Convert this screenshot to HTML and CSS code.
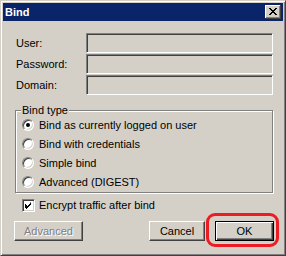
FILE: index.html
```html
<!DOCTYPE html>
<html lang="en">
<head>
<meta charset="UTF-8">
<title>Bind</title>
<link rel="stylesheet" href="styles.css">
</head>
<body>
<div class="window">
    <div class="titlebar">
        <span class="title">Bind</span>
        <span class="close-btn">
            <svg width="8" height="7" viewBox="0 0 8 7"><path d="M0 0h2v1h1v1h2v-1h1v-1h2v1h-1v1h-1v1h-1v1h1v1h1v1h1v1h-2v-1h-1v-1h-2v1h-1v1h-2v-1h1v-1h1v-1h1v-1h-1v-1h-1v-1h-1z" fill="#000"/></svg>
        </span>
    </div>
    <div class="content">
        <div class="fields">
            <label>User:</label><span class="field"></span>
            <label>Password:</label><span class="field"></span>
            <label>Domain:</label><span class="field"></span>
        </div>

        <div class="group">
            <span class="group-label">Bind type</span>
            <div class="option"><span class="radio checked"></span>Bind as currently logged on user</div>
            <div class="option"><span class="radio"></span>Bind with credentials</div>
            <div class="option"><span class="radio"></span>Simple bind</div>
            <div class="option"><span class="radio"></span>Advanced (DIGEST)</div>
        </div>

        <div class="option encrypt">
            <span class="checkbox">
                <svg width="7" height="7" viewBox="0 0 7 7"><path d="M6 0v3h-1v1h-1v1h-1v1h-1v1h-1v-1h-1v-4h1v1h1v1h1v-1h1v-1h1v-1z" fill="#000"/></svg>
            </span>Encrypt traffic after bind
        </div>

        <div class="buttons">
            <button class="btn disabled advanced">Advanced</button>
            <span class="spacer"></span>
            <button class="btn cancel">Cancel</button>
            <button class="btn default ok">OK</button>
        </div>
    </div>
</div>
</body>
</html>
```

FILE: styles.css
```css
body {
    margin: 0;
    background: #d4d0c8;
    font-family: "Liberation Sans", Arial, sans-serif;
    font-size: 11px;
    color: #000;
}

.window {
    width: 286px;
    height: 256px;
    box-sizing: border-box;
    padding: 2px;
    border: 1px solid;
    border-color: #d4d0c8 #404040 #404040 #d4d0c8;
    box-shadow: inset 1px 1px #fff, inset -1px -1px #808080;
    background: #d4d0c8;
}

.titlebar {
    height: 18px;
    background: #0a246a;
    display: flex;
    align-items: center;
    justify-content: space-between;
    padding: 0 2px 0 2px;
}

.title {
    color: #fff;
    font-weight: bold;
    font-size: 11px;
}

.close-btn {
    width: 16px;
    height: 14px;
    box-sizing: border-box;
    background: #d4d0c8;
    box-shadow: inset -1px -1px #404040, inset 1px 1px #fff, inset -2px -2px #808080;
    display: flex;
    align-items: center;
    justify-content: center;
    padding: 0 1px 1px 0;
}

.content {
    padding: 12px 10px 0 12px;
}

.fields {
    display: grid;
    grid-template-columns: 71px 1fr;
    grid-auto-rows: 20px;
    row-gap: 1px;
    align-items: center;
}

.fields label {
    padding-left: 1px;
}

.field {
    height: 20px;
    box-sizing: border-box;
    border: 1px solid;
    border-color: #808080 #fff #fff #808080;
    box-shadow: inset 1px 1px #404040, inset -1px -1px #d4d0c8;
}

.group {
    position: relative;
    margin-top: 15px;
    height: 83px;
    box-sizing: border-box;
    border: 1px solid #808080;
    box-shadow: inset 1px 1px #fff, 1px 1px #fff;
    padding: 4px 0 0 6px;
}

.group-label {
    position: absolute;
    top: -7px;
    left: 5px;
    padding: 0 1px 0 1px;
    background: #d4d0c8;
    line-height: 13px;
}

.option {
    height: 19px;
    display: flex;
    align-items: center;
    white-space: nowrap;
}

.radio {
    width: 12px;
    height: 12px;
    box-sizing: border-box;
    border-radius: 50%;
    border: 1px solid;
    border-color: #808080 #fff #fff #808080;
    box-shadow: inset 1px 1px #404040, inset -1px -1px #d4d0c8;
    background: #fff;
    margin-right: 5px;
    display: flex;
    align-items: center;
    justify-content: center;
}

.radio.checked::after {
    content: "";
    width: 4px;
    height: 4px;
    border-radius: 50%;
    background: #000;
}

.encrypt {
    margin-top: 4px;
    height: 16px;
    padding-left: 7px;
}

.checkbox {
    width: 13px;
    height: 13px;
    box-sizing: border-box;
    border: 1px solid;
    border-color: #808080 #fff #fff #808080;
    box-shadow: inset 1px 1px #404040, inset -1px -1px #d4d0c8;
    background: #fff;
    margin-right: 4px;
    display: flex;
    align-items: center;
    justify-content: center;
}

.buttons {
    display: flex;
    margin: 8px -1px 0 -1px;
}

.spacer {
    flex: 1;
}

.btn {
    height: 20px;
    box-sizing: border-box;
    font-family: "Liberation Sans", Arial, sans-serif;
    font-size: 11px;
    color: #000;
    background: #d4d0c8;
    border: 1px solid;
    border-color: #fff #404040 #404040 #fff;
    box-shadow: inset -1px -1px #808080;
    padding: 0;
}

.btn.disabled {
    color: #808080;
    text-shadow: 1px 1px #fff;
}

.advanced {
    width: 69px;
}

.cancel {
    width: 56px;
    margin-right: 10px;
}

.btn.default {
    position: relative;
    border: 1px solid #000;
    box-shadow: inset 1px 1px #fff, inset -1px -1px #404040, inset -2px -2px #808080;
}

.ok {
    width: 59px;
}

/* red highlight drawn over the screenshot */
.ok::after {
    content: "";
    position: absolute;
    left: -10px;
    top: -9px;
    right: -6px;
    bottom: -7px;
    border: 3px solid #ed1c24;
    border-radius: 9px;
}
```
